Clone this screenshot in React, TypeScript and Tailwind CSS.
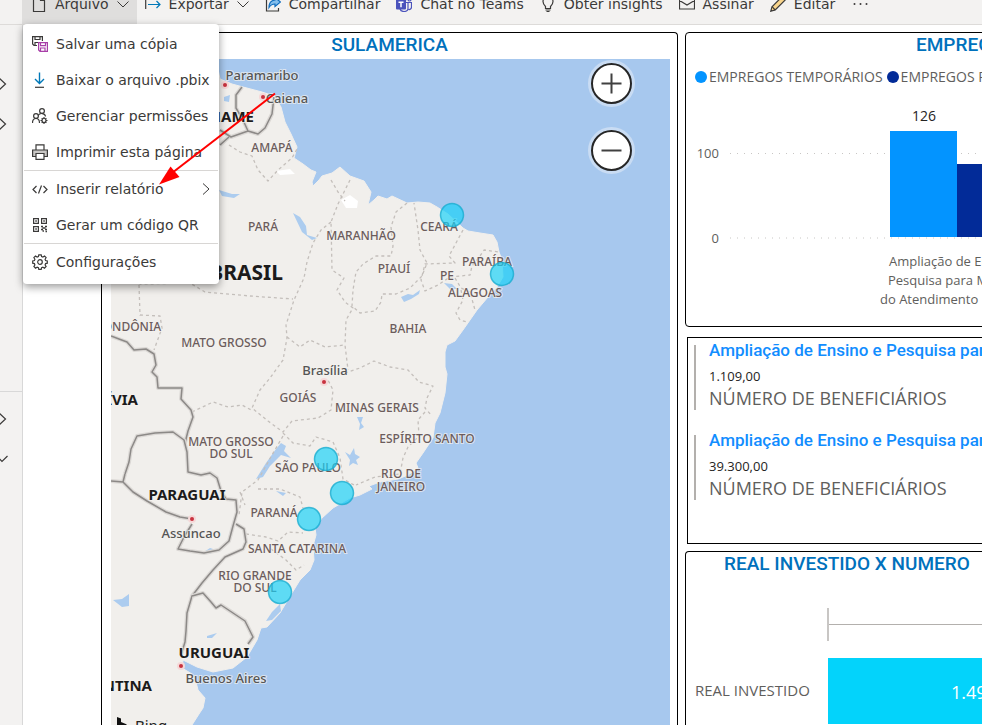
import type { ReactNode } from "react";

const ink = "#3b3a39";
const blue = "#0078b8";

function Icon({ children, size = 16 }: { children: ReactNode; size?: number }) {
  return (
    <svg width={size} height={size} viewBox={`0 0 ${size} ${size}`} fill="none" stroke={ink} strokeWidth="1.2" aria-hidden="true" className="shrink-0">
      {children}
    </svg>
  );
}

const FileIcon = () => (
  <Icon>
    <path d="M2.500 .5h7l4 4v11h-11zM9.500 .5v4h4" />
  </Icon>
);
const ExportIcon = () => (
  <Icon>
    <path d="M.7 4v9" />
    <path d="M3 8.500h12M11.500 5l3.500 3.500-3.500 3.500" stroke={blue} />
  </Icon>
);
const ShareIcon = () => (
  <Icon>
    <path d="M5 3H1.500v12h12v-3" />
    <path d="M10 1.500l5.500 4.500-5.500 4.500V8C7 8 5.500 9 4 11.500 4 7 6.500 4.500 10 4z" fill="#83beec" stroke="#0f6cbd" />
  </Icon>
);
const TeamsIcon = () => (
  <Icon>
    <path d="M10 6.500h5.500v4.500a2.500 2.500 0 0 1-3 2.500M12 6.500v6c0 2-1.500 3-4 3-2 0-3.500-1-4-2.500" stroke="#4b53bc" />
    <circle cx="13.500" cy="3.500" r="1.500" stroke="#4b53bc" />
    <circle cx="8.500" cy="2.500" r="2" stroke="#4b53bc" />
    <rect x="0" y="3.500" width="10" height="10" rx="1" fill="#4b53bc" stroke="none" />
    <path d="M2.500 6.300h5M5 6.300v5" stroke="#fff" strokeWidth="1.500" />
  </Icon>
);
const BulbIcon = () => (
  <Icon>
    <path d="M5.500 12.500v-2C4 9 3 7.500 3 5.500a5 5 0 0 1 10 0c0 2-1 3.500-2.500 5v2zM5.500 14h5M6.500 15.500h3" />
  </Icon>
);
const MailIcon = () => (
  <Icon>
    <path d="M.5 2.500h15v10.500H.5zM.5 4.500L8 9l7.500-4.500" />
  </Icon>
);
const PencilIcon = () => (
  <Icon>
    <path d="M.8 15.200l1.200-4.500L12 .8l3.200 3.200L5.200 14z" fill="#f9d58c" />
    <path d="M2 10.700L5.200 14" />
  </Icon>
);
const ChevronDown = () => (
  <svg width="12" height="12" viewBox="0 0 12 12" fill="none" stroke={ink} aria-hidden="true" className="shrink-0">
    <path d="M.5 3.500L6 9l5.500-5.500" />
  </svg>
);

function ToolButton({ icon, label, menu, active }: { icon: ReactNode; label: string; menu?: boolean; active?: boolean }) {
  return (
    <button type="button" className={`flex h-full shrink-0 items-center gap-2 whitespace-nowrap ${active ? "bg-[#dfdedd] pr-2 pl-[9px]" : "px-2"}`}>
      {icon}
      <span>{label}</span>
      {menu && <ChevronDown />}
    </button>
  );
}

function Toolbar() {
  return (
    <header className="shrink-0 overflow-hidden border-b border-[#dddbd9] bg-[#f3f2f1]">
      <nav className="-mt-4 flex h-10 pl-[22px]">
        <ToolButton icon={<FileIcon />} label="Arquivo" menu active />
        <ToolButton icon={<ExportIcon />} label="Exportar" menu />
        <ToolButton icon={<ShareIcon />} label="Compartilhar" />
        <ToolButton icon={<TeamsIcon />} label="Chat no Teams" />
        <ToolButton icon={<BulbIcon />} label="Obter insights" />
        <ToolButton icon={<MailIcon />} label="Assinar" />
        <ToolButton icon={<PencilIcon />} label="Editar" />
        <button type="button" aria-label="Mais opções" className="flex items-center px-2.5">
          <Icon>
            <g fill={ink} stroke="none">
              <circle cx="1.500" cy="8" r="1" />
              <circle cx="7.500" cy="8" r="1" />
              <circle cx="13.500" cy="8" r="1" />
            </g>
          </Icon>
        </button>
      </nav>
    </header>
  );
}

function MenuItem({ icon, label, submenu }: { icon: ReactNode; label: string; submenu?: boolean }) {
  return (
    <button type="button" role="menuitem" className="flex h-9 w-full items-center gap-2 pr-2 pl-[9px] text-left whitespace-nowrap">
      {icon}
      <span className="flex-1">{label}</span>
      {submenu && (
        <svg width="10" height="12" viewBox="0 0 10 12" fill="none" stroke={ink} aria-hidden="true">
          <path d="M2 .5L8 6l-6 5.500" />
        </svg>
      )}
    </button>
  );
}

function FileMenu() {
  return (
    <div role="menu" className="absolute top-6 left-[23px] w-[196px] rounded-sm bg-white pt-0.5 pb-1 shadow-[0_3px_8px_rgba(0,0,0,0.4)]">
      <MenuItem
        label="Salvar uma cópia"
        icon={
          <Icon>
            <path d="M5 9.500H2L.6 8V.6h9.800V5M3 .6V3.500h5V.6M3 9.500V6.500h3" />
            <path d="M6.600 6.600h8.800v8.800H8L6.600 14zM8.500 6.600v3h5v-3M8.500 15.400v-3.400h4.500v3.400" stroke="#a83fa8" />
          </Icon>
        }
      />
      <MenuItem
        label="Baixar o arquivo .pbix"
        icon={
          <Icon>
            <path d="M7.500 .5v11M3 7l4.500 4.500L12 7" stroke={blue} strokeWidth="1.400" />
            <path d="M3 15.300h9" />
          </Icon>
        }
      />
      <MenuItem
        label="Gerenciar permissões"
        icon={
          <Icon>
            <circle cx="10" cy="3" r="2.400" />
            <circle cx="4" cy="8" r="2.400" />
            <path d="M.5 15c0-6 7-6 7 0M6 7.500C8 4.500 13 5 13.500 8.500" />
            <circle cx="12" cy="12.500" r="2" />
            <path d="M12 9v1.500M12 14.500V16M8.500 12.500H10M14 12.500h1.500M9.700 10.200l1 1M13.400 13.900l1 1M14.400 10.200l-1 1M10.700 13.900l-1 1" />
          </Icon>
        }
      />
      <MenuItem
        label="Imprimir esta página"
        icon={
          <Icon>
            <path d="M4 6V.8h8V6" />
            <path d="M.6 6h14.800v6.500H.6z" fill="#c8c6c4" />
            <path d="M4 9.500h8v5.800H4z" fill="#fff" />
          </Icon>
        }
      />
      <hr className="mx-px border-[#d8d6d4]" />
      <MenuItem
        label="Inserir relatório"
        submenu
        icon={
          <Icon>
            <path d="M4.500 5L1 8.500 4.500 12M11.500 5L15 8.500 11.500 12M9.500 4.500l-3 8" />
          </Icon>
        }
      />
      <MenuItem
        label="Gerar um código QR"
        icon={
          <Icon>
            <path d="M1.600 1.600h4.800v4.800H1.600zM9.600 1.600h4.800v4.800H9.600zM1.600 9.600h4.800v4.800H1.600z" />
            <path d="M3.300 4h1.500M11.300 4h1.500M3.300 12h1.500" strokeWidth="1.500" />
            <path d="M9 9.500h2M13 9.500h2M10.500 11h3M9 12.500h2M13 12.500h2M10.500 14h1.500M13.500 14.500h1.500" strokeWidth="1.500" />
          </Icon>
        }
      />
      <hr className="mx-px border-[#d8d6d4]" />
      <MenuItem
        label="Configurações"
        icon={
          <Icon>
            <path d="M6.800 .8h2.400l.4 1.800 1.300.5 1.600-1 1.600 1.600-1 1.600.5 1.300 1.700.4v2.200l-1.700.4-.5 1.400 1 1.500-1.600 1.700-1.600-1-1.300.5-.4 1.700H6.800l-.4-1.700-1.300-.5-1.600 1-1.600-1.700 1-1.500-.5-1.400-1.700-.4V7l1.700-.4.5-1.300-1-1.600L3.500 2.100l1.600 1 1.300-.5z" />
            <circle cx="8" cy="8" r="2.300" />
          </Icon>
        }
      />
    </div>
  );
}

function RailButton({ label, d }: { label: string; d: string }) {
  return (
    <button type="button" aria-label={label} className="flex h-10 w-full items-center">
      <svg width="8" height="12" viewBox="0 0 8 12" fill="none" stroke={ink} strokeWidth="1.200" aria-hidden="true">
        <path d={d} />
      </svg>
    </button>
  );
}

function Rail() {
  const right = "M-1 0L5.500 6L-1 12";
  return (
    <aside className="flex w-[23px] shrink-0 flex-col border-r border-[#d8d8d8] bg-[#f3f2f1] pt-[39px]">
      <RailButton label="Expandir favoritos" d={right} />
      <RailButton label="Expandir recentes" d={right} />
      <hr className="mt-[247px] mb-[7px] border-[#d8d8d8]" />
      <RailButton label="Expandir áreas" d={right} />
      <RailButton label="Recolher workspace" d="M-3 3L2 8.500L7.500 3" />
    </aside>
  );
}

type Label = { t: string; x: number; y: number; a?: "end" };

const states: Label[] = [
  { t: "AMAPÁ", x: 272, y: 152 },
  { t: "PARÁ", x: 263, y: 231 },
  { t: "MARANHÃO", x: 361, y: 240 },
  { t: "CEARÁ", x: 439, y: 231 },
  { t: "PARAÍBA", x: 487, y: 266 },
  { t: "PE", x: 447, y: 280 },
  { t: "ALAGOAS", x: 475, y: 297 },
  { t: "PIAUÍ", x: 394, y: 273 },
  { t: "BAHIA", x: 408, y: 333 },
  { t: "MATO GROSSO", x: 224, y: 347 },
  { t: "RONDÔNIA", x: 161, y: 331, a: "end" },
  { t: "GOIÁS", x: 298, y: 402 },
  { t: "MINAS GERAIS", x: 377, y: 412 },
  { t: "ESPÍRITO SANTO", x: 427, y: 443 },
  { t: "RIO DE", x: 401, y: 478 },
  { t: "JANEIRO", x: 401, y: 491 },
  { t: "MATO GROSSO", x: 231, y: 446 },
  { t: "DO SUL", x: 231, y: 458 },
  { t: "SÃO PAULO", x: 308, y: 472 },
  { t: "PARANÁ", x: 274, y: 517 },
  { t: "SANTA CATARINA", x: 297, y: 553 },
  { t: "RIO GRANDE", x: 255, y: 580 },
  { t: "DO SUL", x: 255, y: 592 },
];
const cities: Label[] = [
  { t: "Paramaribo", x: 262, y: 80 },
  { t: "Caiena", x: 287, y: 103 },
  { t: "Brasília", x: 325, y: 375 },
  { t: "Assuncao", x: 191, y: 538 },
  { t: "Buenos Aires", x: 226, y: 683 },
];
const countries: Label[] = [
  { t: "SURINAME", x: 254, y: 122, a: "end" },
  { t: "BOLÍVIA", x: 138, y: 405, a: "end" },
  { t: "PARAGUAI", x: 187, y: 500 },
  { t: "URUGUAI", x: 214, y: 658 },
  { t: "ARGENTINA", x: 152, y: 691, a: "end" },
];
const capitals = [[225, 85], [263, 97], [324, 382], [192, 519], [181, 666]];
const bubbles = [[452, 215], [502, 274], [326, 459], [342, 493], [309, 519], [280, 592]];

const land =
  "M111 59H216L220 79L232 84L243 87L262 92L274 96L281 107L285 122L291 134L297 147L294 158L303 164L311 170L316 172L312 182L313 186L319 180L322 176L332 173L340 167L350 176L364 181L371 192L368 205L374 200L378 196L387 199L392 196L407 203L418 202L430 203L437 207L448 214L463 228L468 231L480 233L493 235L497 242L499 252L502 260L503 277L497 287L488 297L477 310L463 330L455 341L447 345L445 352L445 367L447 374L445 393L440 413L435 423L433 438L423 453L416 463L418 468L408 475L398 479L380 482L369 486L372 489L360 495L350 498L333 508L322 518L315 528L316 535L313 546L314 560L310 570L300 580L292 593L280 613L267 627L261 628L257 640L247 657L233 668L213 672L197 667L183 660L182 668L192 674L196 682L198 690L205 698L203 708L199 714L192 725L111 725Z";
const dotted = [
  "M229 145L240 152L252 156L258 170L268 181L278 170L292 158L297 149",
  "M331 222L321 230L313 243L307 262L304 278L294 300L286 325L287 338L283 360L270 378L260 390L252 408L268 421L283 432L292 421L318 418L331 410L333 390L327 378",
  "M111 272L140 284L190 283L205 292L250 296L293 299M139 285L140 315L160 316L162 328L154 350",
  "M287 337L300 347L310 340L325 347L345 345L348 370M350 180L338 204L331 222L332 270L344 278L337 290L345 302L353 308L346 320L345 345",
  "M407 203L396 212L391 227L393 246L391 256L376 256L363 264L356 272L353 290L352 306L360 313L375 311L381 302L382 294L396 294L410 288L422 276L427 263L420 250L418 230L414 203",
  "M463 230L456 243L449 256L455 263L425 264L421 280L425 291L438 285L450 277L470 275L472 266L480 256L484 250L499 252",
  "M455 278L461 288L470 292L475 310M461 290L463 300L456 313L460 320L467 322",
  "M345 373L360 368L374 361L390 367L408 370L419 382L433 386L427 398L425 408L432 416",
  "M425 412L418 420L419 436L408 447L403 458L400 474L375 477L356 485M283 433L293 443L310 446L316 437L333 442L340 458L343 479L354 485",
  "M192 412L213 402L228 407L242 405L253 411M283 436L272 455L258 480L242 492L239 515",
  "M258 489L280 489L300 497L303 508M246 534L266 537L278 541L288 532L303 533M271 549L286 560L296 570L304 565",
  "M331 180L338 192L345 201M240 492L245 505",
];
const borders = [
  "M111 336L119 339L127 342L134 350L146 349L154 354L156 365L152 372L157 377L158 388L182 388L181 399L191 410L193 417L188 431L185 443",
  "M125 474L129 462L131 449L137 436L155 433L173 432L184 440L187 452L188 472L201 475L210 473L217 478L221 491L226 499L236 500L237 512L233 526L229 541L219 550L204 553L190 551L178 549L184 537L192 524",
  "M111 481L123 482L133 492L147 501L166 512L180 517L192 519M123 482L125 474",
  "M236 524L244 529L246 542L243 549L225 557L213 570L202 583L192 596L187 613L186 631L185 642L181 655",
  "M192 596L203 593L211 602L216 608L221 605L233 613L245 621L251 633L253 637L248 644",
  "M242 87L236 95L236 108L243 120L248 131L258 134L265 128L272 114L274 97M248 131L231 137L220 130M229 137L220 145",
];
const water = [
  "M293 213L300 217L306 226L307 235L317 238L312 240L302 232Z",
  "M224 97L230 95L229 102L224 101Z",
  "M219 190L232 194L240 194L234 198L222 196Z",
  "M401 297L408 294L413 295L420 290L419 294L411 299L404 302Z",
  "M444 283L452 284L457 289L450 289Z",
  "M276 449L281 443L286 446L284 451L291 458L281 455L270 466L263 477L256 479L266 463Z",
  "M345 452L350 455L354 448L355 454L360 457L356 460L358 465L353 463L349 466L350 460Z",
  "M357 417L363 417L361 423L364 427L359 430L360 424Z",
  "M113 600L122 599L129 594L129 606L122 607Z",
  "M207 636L217 633L212 638L207 638Z",
  "M280 604L272 612L266 621L272 620L281 611Z",
  "M276 491L286 493L283 496Z",
  "M204 552L210 548L216 550L210 554Z",
];

function BrazilMap() {
  const halo = { paintOrder: "stroke", stroke: "#f4f2ef", strokeOpacity: 0.7, strokeWidth: 2 } as const;
  return (
    <svg role="img" aria-label="Mapa da América do Sul" viewBox="111 59 559 666" width="559" height="666" className="block font-['Noto_Sans',sans-serif]">
      <rect x="111" y="59" width="559" height="666" fill="#a7c8ee" />
      <path d={land} fill="#f1efec" stroke="#f1efec" strokeLinejoin="round" />
      <path d="M341 200L350 195L358 201L357 208L346 208ZM276 171L290 169L295 174L280 175Z" fill="#fff" />
      {water.map((d) => (
        <path key={d} d={d} fill="#acccef" />
      ))}
      {dotted.map((d) => (
        <path key={d} d={d} fill="none" stroke="#c4bfbb" strokeWidth="1.300" strokeDasharray="3 3" strokeLinejoin="round" />
      ))}
      {borders.map((d) => (
        <g key={d} fill="none" strokeLinejoin="round">
          <path d={d} stroke="#dbd8d5" strokeWidth="4" />
          <path d={d} stroke="#8c8987" strokeWidth="1.500" />
        </g>
      ))}
      {capitals.map(([x, y]) => (
        <g key={x}>
          <circle cx={x} cy={y} r="4" fill="#f5d8d8" />
          <circle cx={x} cy={y} r="2" fill="#c8323f" />
        </g>
      ))}
      <g fontSize="12" fontWeight="500" fill="#6b5c5c" {...halo}>
        {states.map((l, i) => (
          <text key={i} x={l.x} y={l.y} textAnchor={l.a ?? "middle"}>{l.t}</text>
        ))}
      </g>
      <g fontSize="13" fontWeight="500" fill="#555" {...halo}>
        {cities.map((l) => (
          <text key={l.t} x={l.x} y={l.y} textAnchor="middle">{l.t}</text>
        ))}
      </g>
      <g fontSize="15" fontWeight="700" fill="#1c1b1b" {...halo}>
        {countries.map((l) => (
          <text key={l.t} x={l.x} y={l.y} textAnchor={l.a ?? "middle"}>{l.t}</text>
        ))}
        <text x="283" y="280" fontSize="21" textAnchor="end">BRASIL</text>
      </g>
      <path d="M117 717l4 1.500v7h-4zM121 722l6 2.500-3 1.500h-3z" fill="#111" />
      <text x="135" y="731" fontSize="15" fill="#222">Bing</text>
      {bubbles.map(([x, y]) => (
        <circle key={x} cx={x} cy={y} r="11.500" fill="#18d2f7" fillOpacity="0.680" stroke="#1badd0" strokeOpacity="0.800" strokeWidth="1.500" />
      ))}
    </svg>
  );
}

function ZoomButton({ label, d }: { label: string; d: string }) {
  return (
    <button type="button" aria-label={label} className="flex size-[41px] items-center justify-center rounded-full border-2 border-[#262626] bg-white ring-3 ring-[#c9dcf3]">
      <svg width="21" height="21" viewBox="0 0 21 21" stroke="#404040" strokeWidth="2" aria-hidden="true">
        <path d={d} />
      </svg>
    </button>
  );
}

function PanelTitle({ children, className }: { children: ReactNode; className: string }) {
  return <h2 className={`h-[26px] font-[Roboto,sans-serif] text-[19px] leading-6 font-medium whitespace-nowrap text-[#0071bc] ${className}`}>{children}</h2>;
}

function MapPanel() {
  return (
    <section className="w-[577px] shrink-0 rounded-t border border-b-0 border-black">
      <PanelTitle className="text-center">SULAMERICA</PanelTitle>
      <div className="relative ml-[9px] w-[559px]">
        <BrazilMap />
        <div className="absolute top-1 right-[38px] flex flex-col gap-[26px]">
          <ZoomButton label="Ampliar" d="M.5 10.500h20M10.500 .5v20" />
          <ZoomButton label="Reduzir" d="M.5 10.500h20" />
        </div>
      </div>
    </section>
  );
}

function LegendItem({ color, label }: { color: string; label: string }) {
  return (
    <li className="flex items-center gap-0.5 whitespace-nowrap">
      <span className="size-3 rounded-full" style={{ backgroundColor: color }} />
      {label}
    </li>
  );
}

function JobsPanel() {
  return (
    <section className="h-[295px] rounded border border-black">
      <PanelTitle className="pl-[230px]">EMPREGOS</PanelTitle>
      <ul className="flex gap-1 pt-2 pl-[9px] text-sm leading-5 text-[#605e5c]">
        <LegendItem color="#0394ff" label="EMPREGOS TEMPORÁRIOS" />
        <LegendItem color="#022b98" label="EMPREGOS PERMANENTES" />
      </ul>
      <svg role="img" aria-label="Empregos por projeto" width="600" height="230" viewBox="686 87 600 230" className="block" fontSize="13" fill="#605e5c">
        <path d="M730 153.500H1286M730 238H1286" stroke="#c8c6c4" strokeDasharray="1 6" />
        <rect x="890" y="131" width="67" height="106" fill="#0394ff" />
        <rect x="957" y="164" width="67" height="73" fill="#022b98" />
        <text x="924" y="121" fontSize="14" textAnchor="middle" fill="#252423">126</text>
        <text x="719" y="158" textAnchor="end">100</text>
        <text x="719" y="243" textAnchor="end">0</text>
        <text x="889" y="266">Ampliação de Ensino e</text>
        <text x="888" y="285">Pesquisa para Melhoria</text>
        <text x="880" y="304">do Atendimento no SUS</text>
      </svg>
    </section>
  );
}

function Kpi({ value }: { value: string }) {
  return (
    <article className="h-[65px] border-l-2 border-[#b3b0ad] pl-[13px] whitespace-nowrap">
      <h3 className="-mt-[5px] font-[Roboto,sans-serif] text-[17px] leading-5 font-medium text-[#118dff]">Ampliação de Ensino e Pesquisa para</h3>
      <p className="pt-1.5 text-[13px] leading-5 text-[#252423]">{value}</p>
      <p className="text-lg leading-6 text-[#605e5c]">NÚMERO DE BENEFICIÁRIOS</p>
    </article>
  );
}

function InvestmentPanel() {
  return (
    <section className="mt-[7px] rounded-t border border-b-0 border-black">
      <PanelTitle className="pl-[38px]">REAL INVESTIDO X NUMERO</PanelTitle>
      <svg role="img" aria-label="Real investido" width="600" height="148" viewBox="686 578 600 148" className="block" fontSize="15" fill="#605e5c">
        <path d="M828 608v33" stroke="#c8c6c4" strokeWidth="2" />
        <path d="M829 624.500h457" stroke="#b3b0ad" />
        <rect x="828" y="658" width="458" height="66" fill="#03d3fb" />
        <text x="695" y="696">REAL INVESTIDO</text>
        <text x="951" y="699" fontSize="18" fill="#fff">1.490.000</text>
      </svg>
    </section>
  );
}

export default function App() {
  return (
    <div className="relative flex h-screen flex-col overflow-hidden bg-white font-['DejaVu_Sans',sans-serif] text-sm text-[#3b3a39]">
      <Toolbar />
      <div className="flex min-h-0 flex-1">
        <Rail />
        <main className="flex min-w-0 flex-1 gap-[7px] overflow-hidden pt-[7px] pl-[78px] font-['Open_Sans',sans-serif]">
          <MapPanel />
          <div className="min-w-[602px] flex-1">
            <JobsPanel />
            <section className="mt-2.5 ml-0.5 flex h-[207px] flex-col gap-[25px] border border-black pt-[7px] pl-1.5">
              <Kpi value="1.109,00" />
              <Kpi value="39.300,00" />
            </section>
            <InvestmentPanel />
          </div>
        </main>
      </div>
      <FileMenu />
      <svg width="120" height="96" viewBox="157 91 120 96" aria-hidden="true" className="pointer-events-none absolute top-[91px] left-[157px]">
        <path d="M275 93.500L172 173" stroke="#f00" strokeWidth="2" />
        <path d="M159 184.500L170.500 166.500L179.500 177Z" fill="#f00" />
      </svg>
    </div>
  );
}
